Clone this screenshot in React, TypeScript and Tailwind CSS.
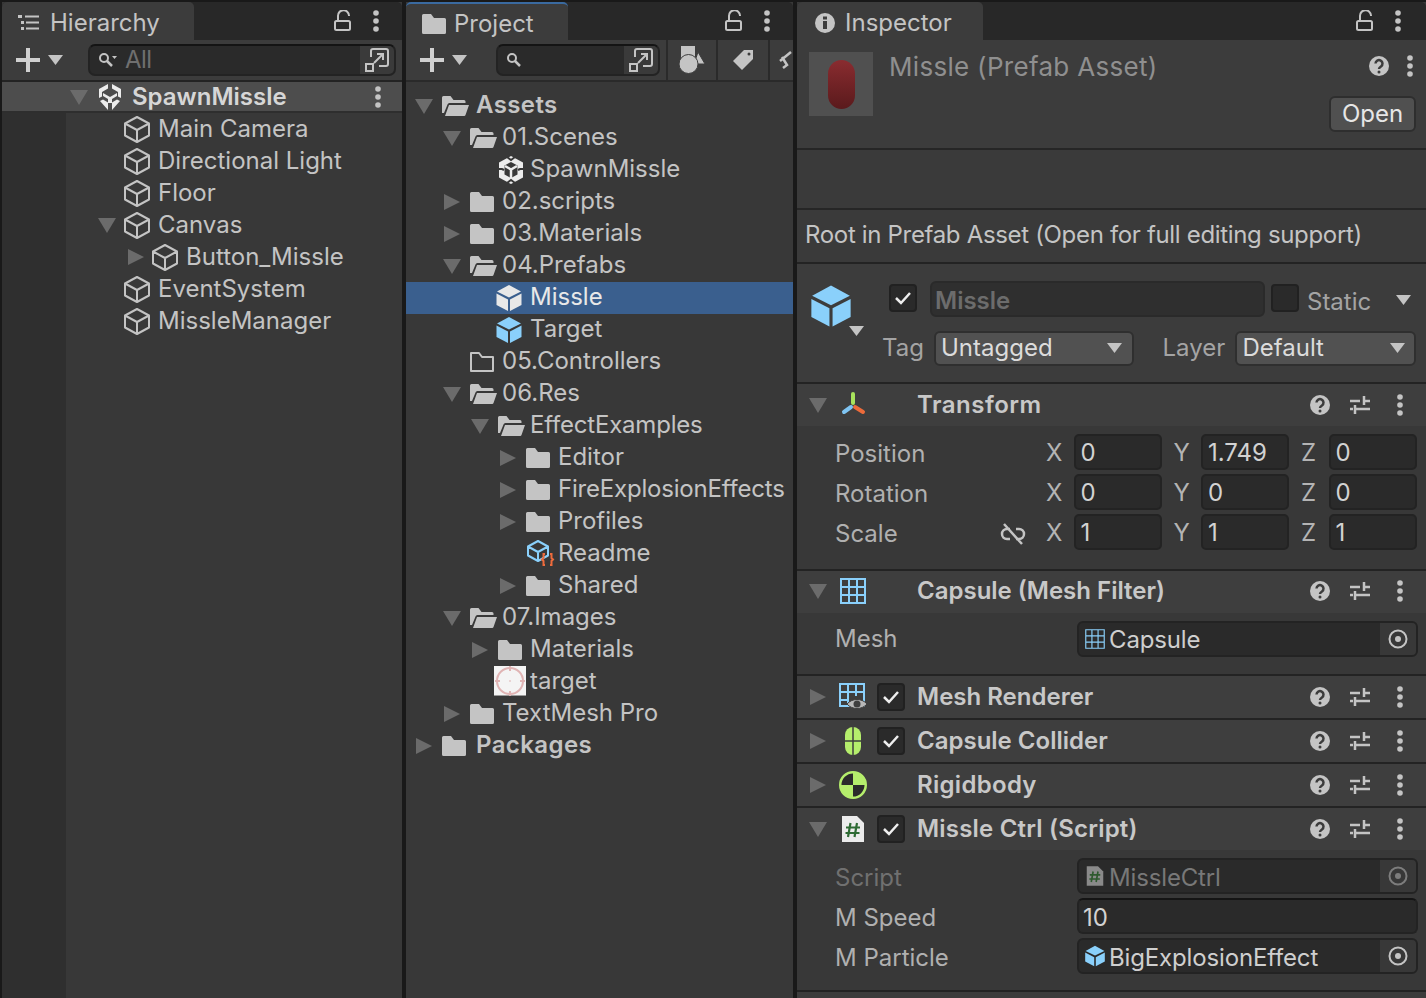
import type { ReactNode } from 'react'

const ink = '#c4c4c4'

function Tri({ dir }: { dir: 'down' | 'right' }) {
  return (
    <svg width="18" height="18" viewBox="0 0 18 18" className="shrink-0">
      {dir === 'down'
        ? <path d="M0 2h18L9 17z" fill="#6b6b6b" />
        : <path d="M1 1l16 8-16 8z" fill="#6b6b6b" />}
    </svg>
  )
}

function Caret({ color = ink }: { color?: string }) {
  return (
    <svg width="15" height="10" viewBox="0 0 15 10" className="shrink-0">
      <path d="M0 0h15L7.500 10z" fill={color} />
    </svg>
  )
}

function Kebab({ className = '' }: { className?: string }) {
  return (
    <svg width="6" height="22" viewBox="0 0 6 22" className={`shrink-0 ${className}`}>
      <circle cx="3" cy="3" r="2.800" fill={ink} />
      <circle cx="3" cy="11" r="2.800" fill={ink} />
      <circle cx="3" cy="19" r="2.800" fill={ink} />
    </svg>
  )
}

function Lock() {
  return (
    <svg width="18" height="22" viewBox="0 0 18 22" className="shrink-0">
      <rect x="1" y="11" width="15" height="9" rx="1.500" fill="none" stroke={ink} strokeWidth="2" />
      <path d="M4 11V6a5.500 5.500 0 0 1 11-.5V6" fill="none" stroke={ink} strokeWidth="2" />
    </svg>
  )
}

function CubeLine() {
  return (
    <svg width="28" height="28" viewBox="0 0 28 28" className="shrink-0">
      <path d="M14 2l12 6.500v12L14 27 2 20.500v-12zM2 8.500L14 15l12-6.500M14 15v12" fill="none" stroke={ink} strokeWidth="2" strokeLinejoin="round" />
    </svg>
  )
}

function Cube({ color = '#8ad0fb', size = 28 }: { color?: string; size?: number }) {
  return (
    <svg width={size} height={size} viewBox="0 0 28 28" className="shrink-0">
      <path d="M14 1l12 6.500L14 13.500 2 7.500z" fill={color} />
      <path d="M1.500 9.500L13 15.500V27L1.500 21z" fill={color} />
      <path d="M26.500 9.500L15 15.500V27l11.500-6z" fill={color} />
    </svg>
  )
}

function FolderFill() {
  return (
    <svg width="24" height="20" viewBox="0 0 24 20" className="shrink-0">
      <path d="M1.500 0h7.500l3 4h10.500a1.500 1.500 0 0 1 1.500 1.500V18.500a1.500 1.500 0 0 1-1.500 1.500H1.500A1.500 1.500 0 0 1 0 18.500V1.500A1.500 1.500 0 0 1 1.500 0z" fill={ink} />
    </svg>
  )
}

function FolderOpen() {
  return (
    <svg width="27" height="20" viewBox="0 0 27 20" className="shrink-0">
      <path d="M0 1.500A1.500 1.500 0 0 1 1.500 0h7l3 4h10.500a1.500 1.500 0 0 1 1.500 1.500V7H7.500a2 2 0 0 0-2 1.500L2 17H0z" fill={ink} />
      <path d="M7 9h20l-3.500 10a1.500 1.500 0 0 1-1.500 1H3z" fill={ink} />
    </svg>
  )
}

function FolderEmpty() {
  return (
    <svg width="24" height="20" viewBox="0 0 24 20" className="shrink-0">
      <path d="M1 1h8l3 4h11v14H1z" fill="none" stroke={ink} strokeWidth="2" strokeLinejoin="round" />
    </svg>
  )
}

function UnityLogo() {
  return (
    <svg width="26" height="28" viewBox="0 0 26 28" className="shrink-0">
      <path d="M13 0l12 6.500v15L13 28 1 21.500v-15z" fill="#ececec" />
      <path d="M13 6l6.500 3.500v9L13 22l-6.500-3.500v-9z" fill="#383838" />
      <path d="M0 13h4l2 1M26 13h-4l-2 1M9 1l4 3 4-3M9 27l4-3 4 3" stroke="#383838" strokeWidth="2" fill="none" />
      <path d="M7 10l6 3.500 6-3.500M13 13.500V22" stroke="#ececec" strokeWidth="2.500" fill="none" />
    </svg>
  )
}

// the selected scene row draws the logo as loose white pieces
function SceneLogo() {
  return (
    <svg width="26" height="28" viewBox="0 0 26 28" className="shrink-0">
      <path d="M11 1L2 6v9l3-1.500V9l6-3.500zM15 1l9 5v9l-3-1.500V9l-6-3.500z" fill="#ececec" />
      <path d="M6 10l7 4 7-4v3l-5 3v4h-4v-4l-5-3z" fill="#ececec" />
      <path d="M3 18l3-1.500 5 3V27zM23 18l-3-1.500-5 3V27z" fill="#ececec" />
    </svg>
  )
}

function FoldoutIcon() {
  return (
    <svg width="24" height="24" viewBox="0 0 24 24" className="shrink-0">
      <path d="M6 9V3a2 2 0 0 1 2-2h13a2 2 0 0 1 2 2v13a2 2 0 0 1-2 2h-7" fill="none" stroke={ink} strokeWidth="2" />
      <rect x="1" y="16" width="7" height="7" fill="none" stroke={ink} strokeWidth="2" />
      <path d="M9 15L18 6M12 6h6v6" fill="none" stroke={ink} strokeWidth="2" />
    </svg>
  )
}

function SearchBox({ width, children, glassCaret }: { width: string; children?: ReactNode; glassCaret?: boolean }) {
  return (
    <div className={`${width} h-[32px] flex items-center rounded-[7px] bg-[#2a2a2a] border-2 border-[#232323] border-t-[#141414]`}>
      <div className="flex-1 flex items-center pl-[8px] gap-[8px]">
        <svg width="20" height="16" viewBox="0 0 20 16" className="shrink-0">
          <circle cx="6" cy="6" r="4" fill="none" stroke={ink} strokeWidth="2" />
          <path d="M9 9l5 5" stroke={ink} strokeWidth="2.500" />
          {glassCaret && <path d="M14 4h5l-2.500 3z" fill={ink} />}
        </svg>
        {children}
      </div>
      <div className="w-[34px] h-full bg-[#3a3a3a] rounded-r-[5px] flex items-center justify-center">
        <FoldoutIcon />
      </div>
    </div>
  )
}

function AddButton() {
  return (
    <div className="flex items-center gap-[8px]">
      <svg width="24" height="24" viewBox="0 0 24 24" className="shrink-0">
        <path d="M12 0v24M0 12h24" stroke="#d0d0d0" strokeWidth="4" />
      </svg>
      <Caret />
    </div>
  )
}

function TabBar({ label, icon, tabClass, barClass }: { label: string; icon: ReactNode; tabClass: string; barClass: string }) {
  return (
    <div className="h-[38px] flex bg-[#282828] items-stretch shrink-0 rounded-t-[5px]">
      <div className={`${tabClass} bg-[#3c3c3c] rounded-t-[5px] flex items-center pt-[3px]`}>
        {icon}
        <span className="text-[24px] text-[#c4c4c4]">{label}</span>
      </div>
      <div className={`flex-1 flex items-center justify-end gap-[21px] ${barClass}`}>
        <Lock />
        <Kebab />
      </div>
    </div>
  )
}

function HierarchyRow({ label, left, expander, icon }: { label: string; left: number; expander?: 'down' | 'right'; icon?: ReactNode }) {
  return (
    <div className="h-[32px] flex items-center relative text-[24px] text-[#c4c4c4]" style={{ paddingLeft: left }}>
      {expander && <div className="absolute top-[7px]" style={{ left: expander === 'down' ? left - 25 : left - 24 }}><Tri dir={expander} /></div>}
      <div className="w-[28px] mr-[7px] flex justify-center">{icon ?? <CubeLine />}</div>
      <span>{label}</span>
    </div>
  )
}

function HierarchyPanel() {
  return (
    <div className="w-[400px] shrink-0 flex flex-col bg-[#383838]">
      <TabBar
        label="Hierarchy"
        tabClass="w-[192px] pl-[16px] gap-[10px]"
        barClass="pr-[23px]"
        icon={
          <svg width="22" height="18" viewBox="0 0 22 18" className="shrink-0">
            <rect x="0" y="1" width="4" height="3" fill={ink} />
            <rect x="3" y="7" width="3" height="3" fill={ink} />
            <rect x="3" y="13" width="3" height="3" fill={ink} />
            <path d="M7 2.500h14M8 8.500h13M8 14.500h13" stroke={ink} strokeWidth="2" />
          </svg>
        }
      />
      <div className="h-[42px] bg-[#3c3c3c] flex items-center pl-[14px] shrink-0 border-b-2 border-[#232323]">
        <AddButton />
        <div className="w-[25px]" />
        <SearchBox width="w-[308px]" glassCaret>
          <span className="text-[24px] text-[#6f6f6f] -ml-[1px] tracking-[-0.5px]">All</span>
        </SearchBox>
      </div>
      <div className="h-[31px] bg-[#4d4d4d] flex items-center pl-[68px] pr-[21px] shrink-0 border-b-2 border-[#2e2e2e]">
        <Tri dir="down" />
        <div className="ml-[9px] mr-[9px]"><SceneLogo /></div>
        <span className="text-[24px] font-semibold text-[#d6d6d6] flex-1">SpawnMissle</span>
        <Kebab />
      </div>
      <div className="flex-1 flex">
        <div className="w-[64px] bg-[#2f2f2f]" />
        <div className="flex-1 -ml-[64px]">
          <HierarchyRow label="Main Camera" left={121} />
          <HierarchyRow label="Directional Light" left={121} />
          <HierarchyRow label="Floor" left={121} />
          <HierarchyRow label="Canvas" left={121} expander="down" />
          <HierarchyRow label="Button_Missle" left={149} expander="right" />
          <HierarchyRow label="EventSystem" left={121} />
          <HierarchyRow label="MissleManager" left={121} />
        </div>
      </div>
    </div>
  )
}

type AssetRow = { label: string; depth: number; arrow?: 'down' | 'right'; icon: ReactNode; bold?: boolean; selected?: boolean; tight?: boolean }

const assetRows: AssetRow[] = [
  { label: 'Assets', depth: 0, arrow: 'down', icon: <FolderOpen />, bold: true },
  { label: '01.Scenes', depth: 1, arrow: 'down', icon: <FolderOpen /> },
  { label: 'SpawnMissle', depth: 2, icon: <UnityLogo /> },
  { label: '02.scripts', depth: 1, arrow: 'right', icon: <FolderFill /> },
  { label: '03.Materials', depth: 1, arrow: 'right', icon: <FolderFill /> },
  { label: '04.Prefabs', depth: 1, arrow: 'down', icon: <FolderOpen /> },
  { label: 'Missle', depth: 2, icon: <div className="-ml-[3px]"><Cube color="#e8e8e8" /></div>, selected: true },
  { label: 'Target', depth: 2, icon: <div className="-ml-[3px]"><Cube /></div> },
  { label: '05.Controllers', depth: 1, icon: <FolderEmpty /> },
  { label: '06.Res', depth: 1, arrow: 'down', icon: <FolderOpen /> },
  { label: 'EffectExamples', depth: 2, arrow: 'down', icon: <FolderOpen />, tight: true },
  { label: 'Editor', depth: 3, arrow: 'right', icon: <FolderFill /> },
  { label: 'FireExplosionEffects', depth: 3, arrow: 'right', icon: <FolderFill />, tight: true },
  { label: 'Profiles', depth: 3, arrow: 'right', icon: <FolderFill /> },
  {
    label: 'Readme',
    depth: 3,
    icon: (
      <svg width="30" height="30" viewBox="0 0 30 30" className="shrink-0">
        <path d="M12 2l10 5.500v9L12 22 2 16.500v-9zM2 7.500L12 13l10-5.500M12 13v9" fill="none" stroke="#8ad0fb" strokeWidth="2" strokeLinejoin="round" />
        <path d="M19 15h-1.500v4L16 20.500l1.500 1.500v4H19M24 15h1.500v4l1.500 1.500-1.500 1.500v4H24" fill="none" stroke="#ee6b3c" strokeWidth="2" />
      </svg>
    ),
  },
  { label: 'Shared', depth: 3, arrow: 'right', icon: <FolderFill /> },
  { label: '07.Images', depth: 1, arrow: 'down', icon: <FolderOpen /> },
  { label: 'Materials', depth: 2, arrow: 'right', icon: <FolderFill /> },
  {
    label: 'target',
    depth: 2,
    icon: (
      <svg width="32" height="32" viewBox="0 0 32 32" className="shrink-0 -ml-[4px]">
        <rect width="32" height="29" fill="#f4f4f4" />
        <rect y="29" width="32" height="1" fill="#9a9a9a" />
        <circle cx="16" cy="15" r="13" fill="none" stroke="#e0b4b4" strokeWidth="2" />
        <path d="M16 0v5M16 25v5M1 15h5M26 15h5" stroke="#e0b4b4" strokeWidth="2" />
        <circle cx="16" cy="15" r="1" fill="#e6caca" />
      </svg>
    ),
  },
  { label: 'TextMesh Pro', depth: 1, arrow: 'right', icon: <FolderFill /> },
  { label: 'Packages', depth: 0, arrow: 'right', icon: <FolderFill />, bold: true },
]

function ProjectPanel() {
  return (
    <div className="w-[387px] shrink-0 flex flex-col bg-[#383838]">
      <TabBar
        label="Project"
        tabClass="w-[162px] pl-[16px] gap-[8px] border-t-[2px] border-[#3a6aa0]"
        barClass="pr-[23px]"
        icon={<FolderFill />}
      />
      <div className="h-[42px] bg-[#3c3c3c] flex items-center pl-[14px] shrink-0 border-b-2 border-[#2a2a2a] overflow-hidden">
        <AddButton />
        <div className="w-[29px]" />
        <SearchBox width="w-[165px]" />
        <div className="h-full w-[2px] bg-[#2a2a2a] ml-[6px]" />
        <div className="w-[49px] h-full flex items-center justify-center">
          <svg width="26" height="28" viewBox="0 0 26 28">
            <rect x="2" y="0" width="14" height="13" fill={ink} />
            <path d="M19 6l7 12H15z" fill={ink} stroke="#3c3c3c" strokeWidth="1" />
            <circle cx="9.500" cy="18" r="9.500" fill={ink} stroke="#3c3c3c" strokeWidth="1" />
          </svg>
        </div>
        <div className="h-full w-[2px] bg-[#2a2a2a]" />
        <div className="w-[50px] h-full flex items-center justify-center">
          <svg width="22" height="22" viewBox="0 0 22 22">
            <path d="M12 1h9v9L10 21 1 12z" fill={ink} />
            <circle cx="17" cy="5" r="1.500" fill="#3c3c3c" />
          </svg>
        </div>
        <div className="h-full w-[2px] bg-[#2a2a2a]" />
        <svg width="14" height="24" viewBox="0 0 14 24" className="ml-[9px] shrink-0">
          <path d="M1 13L12 4M3 9l5 8-4 3" fill="none" stroke={ink} strokeWidth="2.500" />
        </svg>
      </div>
      <div className="flex-1 pt-[8px]">
        {assetRows.map((row) => (
          <div key={row.label + row.depth} className={`h-[32px] flex items-center relative text-[24px] ${row.selected ? 'bg-[#3a5f8e] text-[#e8e8e8]' : 'text-[#c4c4c4]'}`} style={{ paddingLeft: 36 + row.depth * 28 }}>
            {row.arrow && <div className="absolute top-[7px]" style={{ left: 9 + row.depth * 28 }}><Tri dir={row.arrow} /></div>}
            <div className={`w-[28px] flex justify-start ${row.bold ? 'mr-[6px]' : 'mr-[4px]'}`}>{row.icon}</div>
            <span className={`-mt-[2px] ${row.bold ? 'font-semibold tracking-[0.4px]' : row.tight ? 'tracking-[-0.2px]' : ''}`}>{row.label}</span>
          </div>
        ))}
      </div>
    </div>
  )
}

function Help() {
  return (
    <svg width="20" height="20" viewBox="0 0 20 20" className="shrink-0">
      <circle cx="10" cy="10" r="10" fill={ink} />
      <path d="M6.500 7.500a3.500 3.500 0 1 1 5.500 3c-1.500 1-2 1.500-2 2.500" fill="none" stroke="#3c3c3c" strokeWidth="2.500" />
      <circle cx="10" cy="16" r="1.500" fill="#3c3c3c" />
    </svg>
  )
}

function Sliders() {
  return (
    <svg width="22" height="20" viewBox="0 0 22 20" className="shrink-0">
      <path d="M1 6h10M14 6h7M1 14h3M7 14h14M15 1v9M6 10v9" stroke={ink} strokeWidth="2.500" />
    </svg>
  )
}

function Check({ on = true }: { on?: boolean }) {
  return (
    <div className="w-[28px] h-[28px] shrink-0 rounded-[4px] bg-[#2a2a2a] border-2 border-[#212121] flex items-center justify-center">
      {on && (
        <svg width="18" height="14" viewBox="0 0 18 14">
          <path d="M2 7l5 5 9-10" fill="none" stroke="#eeeeee" strokeWidth="2.500" />
        </svg>
      )}
    </div>
  )
}

function Comp({ title, arrow, icon, check, titleClass = '', className = '' }: { title: string; arrow: 'down' | 'right'; icon: ReactNode; check?: boolean; titleClass?: string; className?: string }) {
  return (
    <div className={`h-[42px] shrink-0 bg-[#3e3e3e] flex items-center pl-[12px] pr-[23px] border-t-2 border-[#232323] box-content ${className}`}>
      <div className="w-[18px]"><Tri dir={arrow} /></div>
      <div className="w-[34px] ml-[9px] flex justify-center">{icon}</div>
      <div className="w-[28px] ml-[7px] mr-[12px]">{check && <Check />}</div>
      <span className={`text-[24px] font-semibold text-[#c8c8c8] flex-1 ${titleClass}`}>{title}</span>
      <Help />
      <div className="w-[19px]" />
      <Sliders />
      <div className="w-[26px]" />
      <Kebab />
    </div>
  )
}

function VecField({ axis, value, last }: { axis: string; value: string; last?: boolean }) {
  return (
    <div className={`flex items-center ${last ? 'w-[116px]' : 'w-[127.5px] pr-[12px]'}`}>
      <span className="w-[27.5px] -mt-[2px] text-[#b4b4b4]">{axis}</span>
      <div className="flex-1 h-[36px] -mt-[4px] pt-[2px] bg-[#2a2a2a] border-2 border-[#232323] rounded-[5px] flex items-center pl-[5px] text-[#d2d2d2]">{value}</div>
    </div>
  )
}

function VecRow({ label, v, link }: { label: string; v: [string, string, string]; link?: boolean }) {
  return (
    <div className="h-[40px] flex items-center text-[24px]">
      <span className="w-[167px] text-[#b0b0b0]">{label}</span>
      <div className="w-[44px] flex justify-end pr-[20px]">
        {link && (
          <svg width="26" height="22" viewBox="0 0 26 22" className="shrink-0">
            <path d="M10 6H7a5 5 0 0 0 0 10h3M16 6h3a5 5 0 0 1 0 10h-3M4 1l18 20" fill="none" stroke={ink} strokeWidth="2.500" />
          </svg>
        )}
      </div>
      <VecField axis="X" value={v[0]} />
      <VecField axis="Y" value={v[1]} />
      <VecField axis="Z" value={v[2]} last />
    </div>
  )
}

function ObjField({ icon, value, dim, textClass = 'pt-[2px]' }: { icon: ReactNode; value: string; dim?: boolean; textClass?: string }) {
  return (
    <div className="flex-1 h-[36px] bg-[#2a2a2a] border-2 border-[#232323] rounded-[6px] flex items-center text-[24px]">
      <div className="w-[22px] ml-[5px] mr-[3px] flex justify-center">{icon}</div>
      <span className={`flex-1 tracking-[-0.15px] ${textClass} ${dim ? 'text-[#787878]' : 'text-[#cfcfcf]'}`}>{value}</span>
      <div className="w-[36px] h-full bg-[#383838] rounded-r-[4px] flex items-center justify-center">
        <svg width="20" height="20" viewBox="0 0 20 20">
          <circle cx="10" cy="10" r="8.500" fill="none" stroke={dim ? '#7d7d7d' : ink} strokeWidth="2" />
          <circle cx="10" cy="10" r="3" fill={dim ? '#7d7d7d' : ink} />
        </svg>
      </div>
    </div>
  )
}

function MeshIcon({ size = 26, stroke = 2 }: { size?: number; stroke?: number }) {
  return (
    <svg width={size} height={size} viewBox="0 0 26 26" className="shrink-0">
      <path d="M1 1h24v24H1zM9 1v24M17 1v24M1 9h24M1 17h24" fill="none" stroke="#8ad0fb" strokeWidth={stroke} />
    </svg>
  )
}

function ScriptIcon({ dim }: { dim?: boolean }) {
  return (
    <svg width={dim ? 18 : 24} height={dim ? 22 : 28} viewBox="0 0 24 28" className="shrink-0">
      <path d="M1 1h15l7 7v19H1z" fill={dim ? '#8a8a8a' : '#ececec'} />
      <path d="M9.500 8L7 22M16 8l-2.500 14M5 12.500h14M4.500 18h14" stroke={dim ? '#2f5a2f' : '#2e6b34'} strokeWidth="2.200" />
    </svg>
  )
}

function Dropdown({ label, width, caretGap }: { label: string; width: string; caretGap: string }) {
  return (
    <div className={`${width} ${caretGap} h-[35px] bg-[#515151] border-2 border-[#2f2f2f] rounded-[6px] flex items-center pl-[5px] text-[24px] text-[#dcdcdc]`}>
      <span className="flex-1">{label}</span>
      <Caret />
    </div>
  )
}

function PropRow({ label, dim, labelClass = '', children }: { label: string; dim?: boolean; labelClass?: string; children: ReactNode }) {
  return (
    <div className="h-[40px] flex items-center text-[24px]">
      <span className={`w-[242px] shrink-0 ${labelClass} ${dim ? 'text-[#707070]' : 'text-[#b0b0b0]'}`}>{label}</span>
      {children}
    </div>
  )
}

function InspectorPanel() {
  return (
    <div className="flex-1 min-w-0 flex flex-col bg-[#383838] overflow-hidden">
      <TabBar
        label="Inspector"
        tabClass="w-[186px] pl-[18px] gap-[10px]"
        barClass="pr-[25px]"
        icon={
          <svg width="20" height="20" viewBox="0 0 20 20" className="shrink-0">
            <circle cx="10" cy="10" r="10" fill={ink} />
            <rect x="8" y="8" width="4" height="8" fill="#3c3c3c" />
            <rect x="8" y="3.500" width="4" height="3" fill="#3c3c3c" />
          </svg>
        }
      />
      <div className="h-[108px] shrink-0 bg-[#3c3c3c] flex pl-[12px] pt-[12px] pr-[10px]">
        <div className="w-[64px] h-[64px] bg-[#505050] flex items-center justify-center shrink-0">
          <div className="w-[27px] h-[49px] rounded-[13.5px] bg-gradient-to-b from-[#8a2c30] to-[#5a1a1c]" />
        </div>
        <div className="flex-1 ml-[16px]">
          <div className="flex items-center h-[28px] text-[26px] tracking-[0.3px] text-[#8f8f8f] pr-[3px]">
            <span className="flex-1 whitespace-nowrap">Missle (Prefab Asset)</span>
            <Help />
            <div className="w-[18px]" />
            <Kebab />
          </div>
          <div className="flex justify-end mt-[16px]">
            <div className="w-[87px] h-[36px] bg-[#505050] border-2 border-[#2e2e2e] rounded-[6px] flex items-center justify-center text-[24px] text-[#e6e6e6]">Open</div>
          </div>
        </div>
      </div>
      <div className="h-[58px] shrink-0 bg-[#3a3a3a] border-t-2 border-[#262626] box-content" />
      <div className="h-[54px] shrink-0 bg-[#3a3a3a] border-t-2 border-[#262626] flex items-center pl-[8px] pb-[2px] text-[24px] tracking-[-0.33px] text-[#c4c4c4]">
        Root in Prefab Asset (Open for full editing support)
      </div>
      <div className="h-[118px] shrink-0 bg-[#3c3c3c] border-t-2 border-[#232323] box-content px-[10px]">
        <div className="flex items-start pt-[20px] pl-[2px]">
          <div className="w-[44px] h-[44px] mr-[36px] relative shrink-0">
            <Cube size={44} />
            <div className="absolute left-[40px] top-[42px]"><Caret /></div>
          </div>
          <Check />
          <div className="ml-[13px] w-[335px] h-[36px] -mt-[3px] pt-[3px] shrink-0 bg-[#2f2f2f] border-2 border-[#2a2a2a] rounded-[6px] flex items-center pl-[3px] text-[24px] font-semibold text-[#6c6c6c]">Missle</div>
          <div className="ml-[6px]"><Check on={false} /></div>
          <span className="ml-[8px] text-[24px] text-[#a4a4a4]">Static</span>
          <div className="ml-[25px] mt-[11px]"><Caret /></div>
        </div>
        <div className="flex items-center mt-[2px] pl-[75px] text-[24px] text-[#a4a4a4]">
          <span className="w-[52px] shrink-0">Tag</span>
          <Dropdown label="Untagged" width="w-[201px]" caretGap="pr-[10px]" />
          <span className="ml-[28px] w-[73px] shrink-0">Layer</span>
          <Dropdown label="Default" width="w-[181px]" caretGap="pr-[9px]" />
        </div>
      </div>

      <Comp
        title="Transform"
        arrow="down"
        titleClass="tracking-[0.5px]"
        icon={
          <svg width="26" height="26" viewBox="0 0 26 26">
            <path d="M13 2v9" stroke="#a8e35c" strokeWidth="4" strokeLinecap="round" />
            <path d="M11 15L4 20" stroke="#7fc4f2" strokeWidth="4" strokeLinecap="round" />
            <path d="M15 15L23 20" stroke="#ec6b3b" strokeWidth="4" strokeLinecap="round" />
          </svg>
        }
      />
      <div className="h-[143px] shrink-0 bg-[#383838] pl-[38px] pt-[8px]">
        <VecRow label="Position" v={['0', '1.749', '0']} />
        <VecRow label="Rotation" v={['0', '0', '0']} />
        <VecRow label="Scale" v={['1', '1', '1']} link />
      </div>

      <Comp title="Capsule (Mesh Filter)" arrow="down" icon={<MeshIcon />} className="pb-[2px] !h-[40px]" />
      <div className="h-[61px] shrink-0 bg-[#383838] pl-[38px] pr-[8px] pt-[6px]">
        <PropRow label="Mesh">
          <ObjField icon={<MeshIcon size={20} stroke={1.500} />} value="Capsule" />
        </PropRow>
      </div>

      <Comp
        title="Mesh Renderer"
        arrow="right"
        check
        icon={
          <svg width="28" height="28" viewBox="0 0 28 28">
            <path d="M1 1h24v22H1zM9 1v22M17 1v12M1 9h24M1 17h8" fill="none" stroke="#8ad0fb" strokeWidth="2" />
            <path d="M8 21c5-6 15-6 20 0-5 6-15 6-20 0z" fill="#b8b8b8" stroke="#3e3e3e" strokeWidth="1" />
            <circle cx="18" cy="21" r="3.500" fill="#3e3e3e" />
          </svg>
        }
      />
      <Comp
        title="Capsule Collider"
        arrow="right"
        check
        icon={
          <svg width="18" height="28" viewBox="0 0 18 28">
            <rect x="1" y="0" width="16" height="28" rx="8" fill="#b5ee6c" />
            <path d="M9 0v28M1 14h16" stroke="#3e3e3e" strokeWidth="1.500" />
          </svg>
        }
      />
      <Comp
        title="Rigidbody"
        arrow="right"
        titleClass="tracking-[0.3px]"
        icon={
          <svg width="28" height="28" viewBox="0 0 28 28">
            <circle cx="14" cy="14" r="13" fill="#b5ee6c" stroke="#b5ee6c" strokeWidth="2" />
            <path d="M14 2.500A11.500 11.500 0 0 0 2.500 14H14zM14 14v11.500A11.500 11.500 0 0 0 25.500 14z" fill="#2b2b2b" />
          </svg>
        }
      />
      <Comp title="Missle Ctrl (Script)" arrow="down" check titleClass="tracking-[0.2px]" icon={<ScriptIcon />} />
      <div className="h-[140px] shrink-0 bg-[#383838] pl-[38px] pr-[8px] pt-[6px]">
        <PropRow label="Script" dim labelClass="pt-[4px]">
          <ObjField icon={<ScriptIcon dim />} value="MissleCtrl" dim textClass="pt-[4px]" />
        </PropRow>
        <PropRow label="M Speed" labelClass="pt-[4px]">
          <div className="flex-1 h-[36px] bg-[#2a2a2a] border-2 border-[#232323] border-t-[#141414] rounded-[6px] flex items-center pl-[4px] pt-[3px] text-[#d2d2d2]">10</div>
        </PropRow>
        <PropRow label="M Particle" labelClass="pt-[4px]">
          <ObjField icon={<Cube size={22} />} value="BigExplosionEffect" textClass="pt-[4px]" />
        </PropRow>
      </div>
      <div className="h-[6px] shrink-0 bg-[#3c3c3c] border-t-2 border-[#232323] box-content" />
    </div>
  )
}

export default function App() {
  return (
    <div className="w-[1426px] h-[998px] bg-[#191919] flex gap-[4px] pt-[2px] pl-[2px] overflow-hidden font-['Inter',sans-serif]">
      <HierarchyPanel />
      <ProjectPanel />
      <InspectorPanel />
    </div>
  )
}
